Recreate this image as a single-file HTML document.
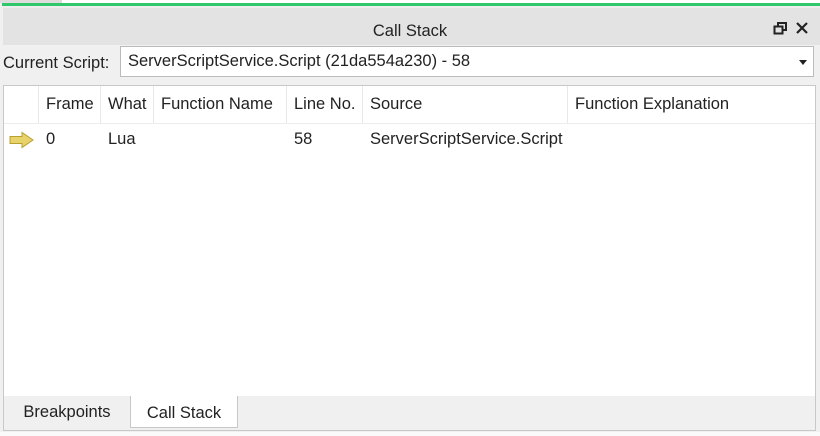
<!DOCTYPE html>
<html><head><style>
body{margin:0;width:820px;height:436px;background:#f0f0f0;font-family:"Liberation Sans",sans-serif;font-size:16.5px;color:#222;position:relative;overflow:hidden}
.a{position:absolute;white-space:nowrap}
.hd{top:86px;height:37px;line-height:37px;border-right:1px solid #e8e8e8;box-sizing:border-box;padding-left:7px;overflow:hidden}
.c{top:127px;line-height:24px}
</style></head><body>
<div class="a" style="left:0;top:0;width:820px;height:3px;background:#fff"></div>
<div class="a" style="left:0;top:0;width:62px;height:3px;background:#ddd"></div>
<div class="a" style="left:2px;top:3px;width:818px;height:3px;background:#2ec86a"></div>
<div class="a" style="left:2px;top:6px;width:818px;height:2px;background:#eee"></div>
<div class="a" style="left:3px;top:8px;width:817px;height:37px;background:#e3e3e3"></div>
<div class="a" style="left:0;top:9px;width:820px;line-height:44px;text-align:center">Call Stack</div>
<svg class="a" style="left:773px;top:21px" width="14" height="14"><rect x="1.5" y="5.5" width="8" height="7" fill="none" stroke="#222" stroke-width="2"/><path d="M5 5V2h8v7h-3" fill="none" stroke="#222" stroke-width="2"/></svg>
<svg class="a" style="left:796px;top:22px" width="12" height="12"><path d="M1 1L11 11M11 1L1 11" stroke="#222" stroke-width="2.2"/></svg>
<div class="a" style="left:3px;top:48px;line-height:30px">Current Script:</div>
<div class="a" style="left:120px;top:46px;width:694px;height:31px;background:#fff;border:1px solid #bbb;box-sizing:border-box;line-height:29px;padding-left:7px">ServerScriptService.Script (21da554a230) - 58</div>
<div class="a" style="left:799px;top:60px;border:4px solid transparent;border-top:5px solid #222"></div>
<div class="a" style="left:3px;top:85px;width:813px;height:312px;background:#fff;border:1px solid #c8c8c8;box-sizing:border-box"></div>
<div class="a" style="left:4px;top:123px;width:811px;height:1px;background:#ececec"></div>
<div class="a hd" style="left:4px;width:35px"></div>
<div class="a hd" style="left:39px;width:62px">Frame</div>
<div class="a hd" style="left:101px;width:53px">What</div>
<div class="a hd" style="left:154px;width:133px">Function Name</div>
<div class="a hd" style="left:287px;width:76px">Line No.</div>
<div class="a hd" style="left:363px;width:205px">Source</div>
<div class="a hd" style="left:568px;width:247px;border:0">Function Explanation</div>
<svg class="a" style="left:9px;top:131px" width="26" height="18"><path d="M1 5.5h12V1.5l11 7.5-11 7.5v-4H1z" fill="#e8d36a" stroke="#b8a030" stroke-width="1"/></svg>
<div class="a c" style="left:46px">0</div>
<div class="a c" style="left:108px">Lua</div>
<div class="a c" style="left:294px">58</div>
<div class="a c" style="left:370px">ServerScriptService.Script</div>
<div class="a" style="left:3px;top:396px;width:813px;height:35px;background:#f0f0f0;border:1px solid #c8c8c8;border-top:0;box-sizing:border-box"></div>
<div class="a" style="left:4px;top:396px;width:126px;line-height:32px;text-align:center">Breakpoints</div>
<div class="a" style="left:130px;top:396px;width:108px;height:32px;background:#fff;border:1px solid #c8c8c8;border-top:0;box-sizing:border-box;line-height:34px;text-align:center">Call Stack</div>
<div class="a" style="left:0;top:432px;width:820px;height:4px;background:#fafafa"></div>
</body></html>
